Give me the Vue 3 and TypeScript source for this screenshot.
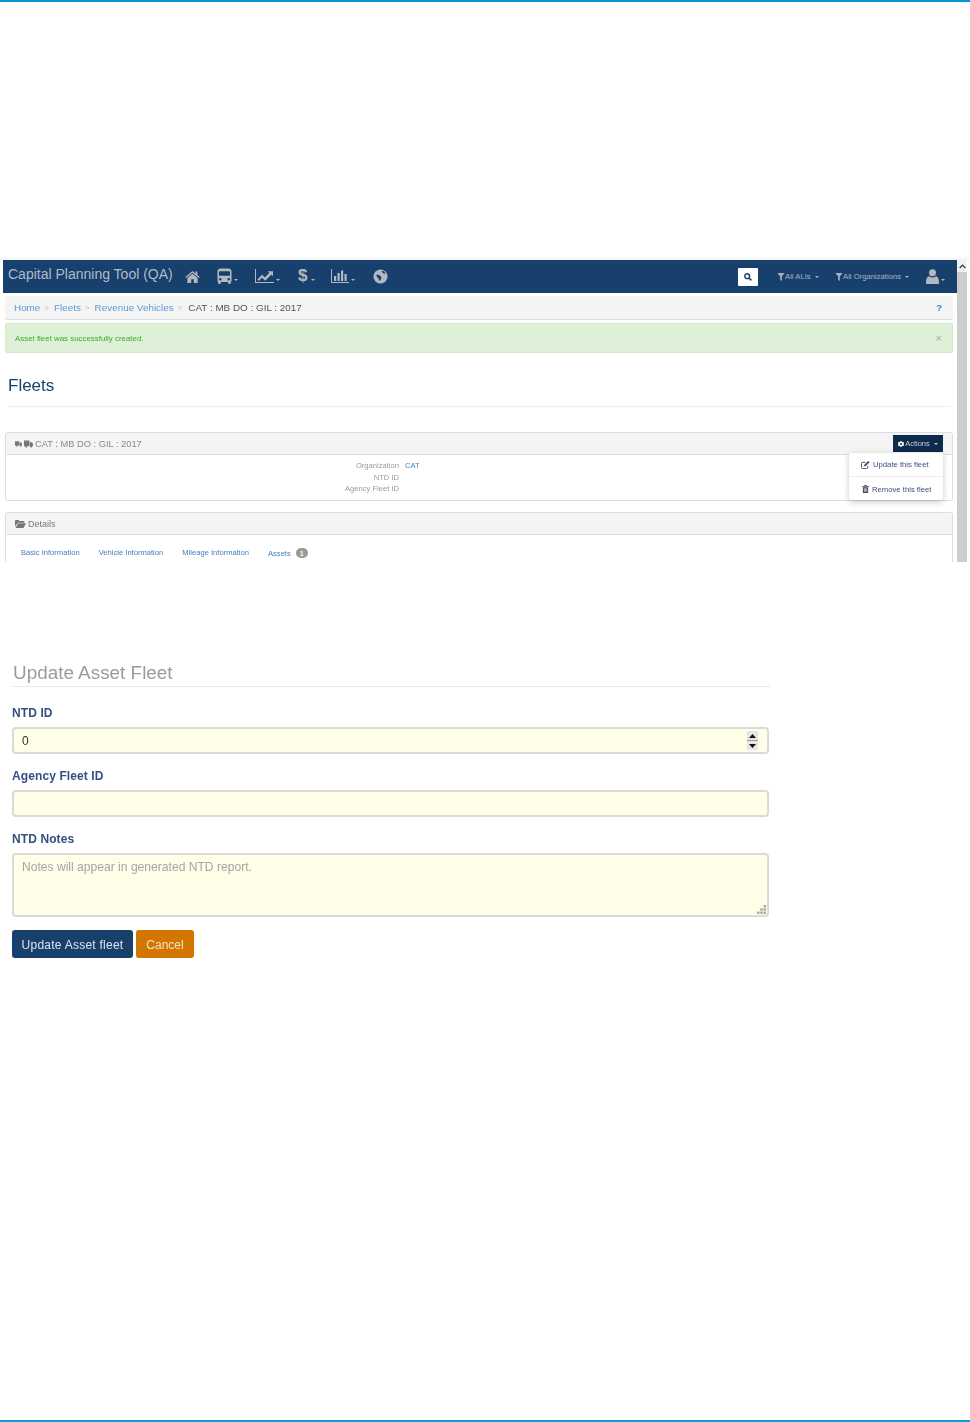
<script setup lang="ts">
const navIcons = [
  { key: 'home', caret: false },
  { key: 'bus', caret: true },
  { key: 'line', caret: true },
  { key: 'dollar', caret: true },
  { key: 'bar', caret: true },
  { key: 'globe', caret: false },
]
const crumbs = ['Home', 'Fleets', 'Revenue Vehicles']
const meta = [
  { label: 'Organization', value: 'CAT' },
  { label: 'NTD ID', value: '' },
  { label: 'Agency Fleet ID', value: '' },
]
const tabs = ['Basic Information', 'Vehicle Information', 'Mileage Information']
</script>

<template>
  <div class="page">
    <div class="stripe"></div>

    <section class="shot">
      <div class="shot-top"></div>
      <div class="shot-body">
        <div class="app">
          <nav class="navbar">
            <span class="brand">Capital Planning Tool (QA)</span>
            <div class="nav-icons">
              <span v-for="n in navIcons" :key="n.key" class="nav-item" :class="'ni-' + n.key">
                <svg v-if="n.key === 'home'" width="15" height="13" viewBox="0 0 15 13"><path fill="currentColor" d="M7.5 1 .3 7l.8 1 6.4-5.3L13.9 8l.8-1-2.4-2V1.4h-1.9v2L7.5 1zM2.4 8v5h3.8V9.3h2.6V13h3.8V8L7.5 3.8 2.4 8z"/></svg>
                <svg v-else-if="n.key === 'bus'" width="15" height="16" viewBox="0 0 15 16"><path fill="currentColor" fill-rule="evenodd" d="M3.5.5h8c1.7 0 3 1.1 3 2.600V13c0 .5-.3.8-.7.900V15.200c0 .4-.3.8-.8.800h-1c-.5 0-.8-.4-.8-.8V14H3.800v1.200c0 .4-.3.8-.8.800H2c-.5 0-.8-.4-.8-.8v-1.300c-.4-.1-.7-.4-.7-.9V3.100C.5 1.600 1.800.5 3.500.5zM2.600 3.200c-.4 0-.6.300-.6.600v3.400c0 .4.300.6.600.6h9.800c.3 0 .6-.2.6-.6V3.800c0-.3-.3-.6-.6-.6H2.600zM3.300 10a1.300 1.300 0 1 0 0 2.600 1.300 1.300 0 0 0 0-2.600zm8.400 0a1.300 1.300 0 1 0 0 2.600 1.300 1.300 0 0 0 0-2.600z"/></svg>
                <svg v-else-if="n.key === 'line'" width="19" height="14" viewBox="0 0 19 14"><path fill="currentColor" d="M0 0h1v13h18v1H0z"/><path fill="currentColor" d="M2.500 10.500 7 5.800l3 2.700 4.400-4.700-1.700-1.600H18v5l-1.600-1.700-6.200 6.300L7 8.700l-3.300 3.200z"/></svg>
                <span v-else-if="n.key === 'dollar'" class="dollar">$</span>
                <svg v-else-if="n.key === 'bar'" width="18" height="14" viewBox="0 0 18 14"><path fill="currentColor" d="M0 0h1v13h17v1H0z"/><path fill="currentColor" d="M3 7h2.200v5H3zM6.500 4h2.200v8H6.500zM10 1.500h2.200V12H10zM13.500 5h2.200v7h-2.200z"/></svg>
                <svg v-else width="15" height="15" viewBox="0 0 15 15"><circle cx="7.500" cy="7.500" r="7" fill="currentColor"/><path fill="#17406d" d="M3.500 6c1-1 2-.5 3 .5s2 1 1.800 2.500-1.300 2.500-2 3c-.8-1-.3-2.300-1-3S2.800 7.500 3.500 6zM9 1.800c1.500.2 2.800 1.200 3.500 2.700-1 .5-1.800.2-2.500-.5S8.500 2.800 9 1.800z"/></svg>
                <i v-if="n.caret" class="caret"></i>
              </span>
            </div>
            <button class="search-btn" aria-label="Search">
              <svg width="8" height="8" viewBox="0 0 10 10"><circle cx="4" cy="4" r="3" fill="none" stroke="#17406d" stroke-width="1.800"/><path d="M6.300 6.300 9.200 9.200" stroke="#17406d" stroke-width="2"/></svg>
            </button>
            <span class="filter f-ali"><svg class="funnel" width="8" height="8" viewBox="0 0 7 8"><path fill="currentColor" d="M0 0h7L4.300 3.600V8L2.700 6.800V3.600z"/></svg>All ALIs<i class="caret small"></i></span>
            <span class="filter f-org"><svg class="funnel" width="8" height="8" viewBox="0 0 7 8"><path fill="currentColor" d="M0 0h7L4.300 3.600V8L2.700 6.800V3.600z"/></svg>All Organizations<i class="caret small"></i></span>
            <span class="user">
              <svg width="13" height="15" viewBox="0 0 13 15"><circle cx="6.500" cy="3.800" r="3.500" fill="currentColor"/><path fill="currentColor" d="M0 14c0-4 1-6.500 3-6.700 1 .8 2.200 1.200 3.500 1.200S9 8.100 10 7.300c2 .2 3 2.700 3 6.700 0 .6-.5 1-1 1H1c-.5 0-1-.4-1-1z"/></svg>
              <i class="caret"></i>
            </span>
          </nav>

          <div class="content">
            <div class="crumbs">
              <template v-for="c in crumbs" :key="c">
                <a>{{ c }}</a><span class="sep">&gt;</span>
              </template>
              <span class="current">CAT : MB DO : GIL : 2017</span>
              <span class="help">?</span>
            </div>

            <div class="alert">
              <span>Asset fleet was successfully created.</span>
              <span class="close">×</span>
            </div>

            <h1 class="page-title">Fleets</h1>

            <div class="panel first">
              <div class="panel-head">
                <svg class="truck" width="7" height="6" viewBox="0 0 10 8"><path fill="currentColor" d="M0 0h6v6.500H0zM6.500 2H9l1 2v2.500H6.500z"/><circle cx="2.500" cy="7" r="1" fill="currentColor"/><circle cx="8" cy="7" r="1" fill="currentColor"/></svg>
                <svg class="truck two" width="9" height="8" viewBox="0 0 10 8"><path fill="currentColor" d="M0 0h6v6.500H0zM6.500 2H9l1 2v2.500H6.500z"/><circle cx="2.500" cy="7" r="1" fill="currentColor"/><circle cx="8" cy="7" r="1" fill="currentColor"/></svg>
                <span>CAT : MB DO : GIL : 2017</span>
                <div class="actions-wrap">
                  <button class="actions">
                    <svg width="6" height="6" viewBox="0 0 10 10"><path fill="#fff" fill-rule="evenodd" d="M4 0h2l.3 1.500 1.200.5L8.800 1.200l1.200 1.200-.8 1.300.5 1.200L10 6 8.800 8.800l-1.300-.8-1.200.5L6 10H4l-.3-1.500-1.200-.5-1.300.8L0 7.600l.8-1.300L.3 5.100 0 4l1.200-2.800 1.300.8 1.200-.5zM5 3.300a1.700 1.700 0 1 0 0 3.400 1.700 1.700 0 0 0 0-3.400z"/></svg>
                    Actions<i class="caret tiny"></i>
                  </button>
                  <ul class="menu">
                    <li>
                      <svg width="9" height="8" viewBox="0 0 10 9"><path fill="none" stroke="#444466" d="M7.500 5.500v2c0 .6-.4 1-1 1h-5c-.6 0-1-.4-1-1v-5c0-.6.4-1 1-1h3.500"/><path fill="#444466" d="M3.500 4.500 8 0l1.500 1.500L5 6H3.500z"/></svg>
                      Update this fleet
                    </li>
                    <li class="second">
                      <svg width="7" height="8" viewBox="0 0 8 9"><path fill="#444466" d="M3 0h2l.5 1H8v1H0V1h2.500zM1 2.500h6V9H1zm1.200 1v4h.7v-4zm1.500 0v4h.7v-4zm1.500 0v4h.7v-4z" fill-rule="evenodd"/></svg>
                      Remove this fleet
                    </li>
                  </ul>
                </div>
              </div>
              <div class="meta">
                <div v-for="m in meta" :key="m.label" class="meta-row">
                  <span class="meta-label">{{ m.label }}</span>
                  <span class="meta-value">{{ m.value }}</span>
                </div>
              </div>
            </div>

            <div class="panel second-panel">
              <div class="panel-head details">
                <svg width="11" height="8" viewBox="0 0 11 8"><path fill="currentColor" d="M0 1c0-.5.3-1 1-1h2.500l1 1H8.500c.5 0 1 .4 1 1v.7H3L0 6.500z"/><path fill="currentColor" d="M3.300 3.200H11L8.500 8H.5z"/></svg>
                <span>Details</span>
              </div>
              <div class="tabs">
                <a v-for="t in tabs" :key="t">{{ t }}</a>
                <a class="assets">Assets<b class="badge">1</b></a>
              </div>
            </div>
          </div>
        </div>
        <div class="scrollbar">
          <div class="sb-btn"><svg width="7" height="5" viewBox="0 0 7 5"><path d="M.7 4 3.500 1.200 6.300 4" fill="none" stroke="#333" stroke-width="1.200"/></svg></div>
          <div class="sb-thumb"></div>
        </div>
      </div>
    </section>

    <form class="form" @submit.prevent>
      <h2 class="form-title">Update Asset Fleet</h2>

      <label class="field-label first-label">NTD ID</label>
      <div class="input-box">
        <input class="inp" value="0" />
        <span class="spinner">
          <span class="spin"><svg width="7" height="4" viewBox="0 0 7 4"><path d="M3.500 0 7 4H0z" fill="#111"/></svg></span>
          <span class="spin"><svg width="7" height="4" viewBox="0 0 7 4"><path d="M0 0h7L3.500 4z" fill="#111"/></svg></span>
        </span>
      </div>

      <label class="field-label">Agency Fleet ID</label>
      <div class="input-box"><input class="inp" /></div>

      <label class="field-label">NTD Notes</label>
      <div class="input-box area">
        <textarea class="ta" placeholder="Notes will appear in generated NTD report."></textarea>
        <svg class="grip" width="9" height="9" viewBox="0 0 9 9"><path fill="#aaa" d="M6.500 0H9v2.500H6.500zM3.300 3.300h2.400v2.400H3.300zM6.500 3.300H9v2.400H6.500zM0 6.500h2.500V9H0zM3.300 6.500h2.400V9H3.300zM6.500 6.500H9V9H6.500z"/></svg>
      </div>

      <div class="buttons">
        <button class="btn primary" type="submit">Update Asset fleet</button>
        <button class="btn warn" type="button">Cancel</button>
      </div>
    </form>

    <div class="grow"></div>
    <div class="stripe bottom"></div>
  </div>
</template>

<style scoped>
.page { width: 970px; height: 1422px; display: flex; flex-direction: column; background: #fff; font-family: "Liberation Sans", Arial, sans-serif; overflow: hidden; }
.stripe { height: 2px; background: #0a93d8; flex: none; }
.stripe.bottom { background: #0a9bdc; }
.grow { flex: 1; }

.shot { margin-top: 254px; height: 306px; flex: none; overflow: hidden; filter: blur(0.35px); }
.shot-top { height: 4px; background: linear-gradient(#fff 0, #f3f3f3 100%); }
.shot-body { display: flex; height: 302px; padding-left: 3px; }
.app { width: 954px; flex: none; }
.scrollbar { width: 10px; margin-left: 0; background: #cdcdcd; display: flex; flex-direction: column; }
.sb-btn { height: 12px; background: #f1f1f1; display: flex; align-items: center; justify-content: center; }
.sb-thumb { flex: 1; background: #cdcdcd; }

.navbar { height: 33px; background: #17406d; color: #a9b5c3; display: flex; align-items: center; padding-left: 5px; }
.brand { font-size: 14px; width: 175px; flex: none; margin-bottom: 5px; color: #b0bbc8; }
.nav-icons { display: flex; align-items: center; width: 555px; flex: none; margin-bottom: 1px; }
.nav-item { display: flex; align-items: center; color: #b3b9c0; }
.ni-home { width: 32px; margin-left: 2px; }
.ni-bus { width: 38px; }
.ni-line { width: 43px; }
.ni-dollar { width: 33px; }
.ni-bar { width: 42px; }
.dollar { font-size: 17px; font-weight: bold; width: 11px; }
.caret { display: inline-block; width: 0; height: 0; border-left: 2.500px solid transparent; border-right: 2.500px solid transparent; border-top: 2.500px solid currentColor; margin-left: 2px; margin-top: 7px; }
.caret.small { margin-top: 1px; margin-left: 4px; }
.caret.tiny { margin-top: 0; margin-left: 3px; border-left-width: 2px; border-right-width: 2px; border-top-width: 2px; vertical-align: middle; }
.search-btn { width: 20px; height: 18px; background: #fff; border: 0; border-radius: 1px; padding: 0; display: flex; align-items: center; justify-content: center; flex: none; }
.filter { font-size: 7.700px; display: flex; align-items: center; color: #a9b3c0; flex: none; }
.funnel { margin-right: 0; }
.f-ali { margin-left: 19px; width: 58px; }
.f-org { width: 91px; }
.user { display: flex; align-items: center; color: #b3b9c0; margin-left: 0; }

.content { margin-left: 2px; width: 948px; }
.crumbs { margin-top: 3px; height: 24px; background: #f4f4f4; border-bottom: 1px solid #ddd; border-radius: 2px; display: flex; align-items: center; padding: 0 8px 0 9px; font-size: 9.900px; box-sizing: border-box; }
.crumbs a { color: #5c9bd6; }
.sep { color: #bbb; margin: 0 5px 0 4px; font-size: 8px; }
.current { color: #555; margin-left: 1px; }
.help { margin-left: auto; font-weight: bold; color: #3a80c8; font-size: 9.500px; margin-right: 3px; }

.alert { margin-top: 3px; height: 30px; background: #dff0d8; border: 1px solid #d6e9c6; border-radius: 2px; box-sizing: border-box; display: flex; align-items: center; justify-content: space-between; padding: 0 10px 0 9px; font-size: 7.900px; color: #3cab2c; }
.close { color: #b5bfb0; font-size: 11px; font-weight: bold; }

.page-title { margin: 0 2px 0 3px; font-weight: normal; font-size: 17px; color: #17406d; height: 53px; line-height: 66px; border-bottom: 1px solid #eee; box-sizing: content-box; }

.panel { border: 1px solid #ddd; border-radius: 3px; box-sizing: border-box; }
.panel.first { margin-top: 25px; height: 69px; }
.panel-head { height: 22px; background: #f4f4f4; border-bottom: 1px solid #ddd; display: flex; align-items: center; padding-left: 9px; font-size: 9.300px; color: #888; box-sizing: border-box; }
.truck { margin-right: 2px; color: #777; }
.truck.two { margin-right: 2px; }
.actions-wrap { margin-left: auto; margin-right: 9px; position: relative; }
.actions { height: 17px; width: 50px; background: #0e2a4c; color: #ccd; border: 0; font-family: inherit; font-size: 7.500px; padding: 0; display: flex; align-items: center; justify-content: center; gap: 1px; }
.menu { position: absolute; right: 0; top: 18px; width: 94px; height: 47px; margin: 0; padding: 0; list-style: none; background: #fff; border-radius: 2px; box-shadow: 0 2px 6px rgba(0,0,0,.22); font-size: 7.700px; color: #3b4f82; z-index: 2; box-sizing: border-box; }
.menu li { height: 23px; display: flex; align-items: center; gap: 3px; padding-left: 12px; border-bottom: 1px solid #eee; }
.menu li.second { border: 0; padding-left: 13px; height: 24px; }

.meta { padding-top: 5px; }
.meta-row { display: flex; height: 11.500px; align-items: center; font-size: 7.600px; }
.meta-label { width: 393px; text-align: right; color: #9a9a9a; }
.meta-value { margin-left: 6px; color: #3f86cc; }

.second-panel { margin-top: 11px; height: 60px; border-bottom: 0; }
.details { gap: 2px; font-size: 9px; color: #777; }
.tabs { display: flex; padding: 13px 0 0 15px; font-size: 7.600px; color: #3f7fc0; gap: 19px; }
.assets { display: flex; align-items: center; }
.badge { margin-left: 5px; width: 12px; height: 10px; border-radius: 5px; background: #999; color: #fff; font-size: 6.500px; display: flex; align-items: center; justify-content: center; }

.form { width: 758px; margin: 99px 0 0 12px; flex: none; filter: blur(0.3px); }
.form-title { margin: 0; font-weight: normal; font-size: 18.900px; color: #9b9b9b; height: 25px; line-height: 23px; border-bottom: 1px solid #e8e8e8; padding-left: 1px; }
.field-label { display: block; font-size: 12px; letter-spacing: .1px; font-weight: bold; color: #35507f; height: 14px; line-height: 14px; margin: 15px 0 7px; }
.first-label { margin-top: 19px; }
.input-box { height: 27px; width: 757px; box-sizing: border-box; border: 2px solid #dbdbd3; border-radius: 4px; background: #fefee9; display: flex; align-items: center; position: relative; }
.inp { flex: 1; min-width: 0; border: 0; outline: 0; background: transparent; padding: 0 8px; font: 12px "Liberation Sans", Arial, sans-serif; color: #333; height: 100%; }
.spinner { width: 11px; height: 19px; margin-right: 9px; display: flex; flex-direction: column; gap: 1px; background: #999; flex: none; }
.spin { flex: 1; background: #e6e6e6; display: flex; align-items: center; justify-content: center; }
.area { height: 64px; }
.ta { width: 100%; height: 100%; border: 0; outline: 0; background: transparent; resize: none; padding: 5px 8px; box-sizing: border-box; font: 12.100px "Liberation Sans", Arial, sans-serif; color: #333; }
.ta::placeholder { color: #a5a5a5; opacity: 1; }
.grip { position: absolute; right: 1px; bottom: 1px; }
.buttons { display: flex; gap: 3px; margin-top: 13px; }
.btn { height: 28px; border: 0; border-radius: 3px; font: 12px "Liberation Sans", Arial, sans-serif; padding: 1px 0 0; }
.primary { width: 121px; background: #17406d; color: #dfe5ee; letter-spacing: .25px; }
.warn { width: 58px; background: #d27600; color: #f7e2c5; }
</style>
